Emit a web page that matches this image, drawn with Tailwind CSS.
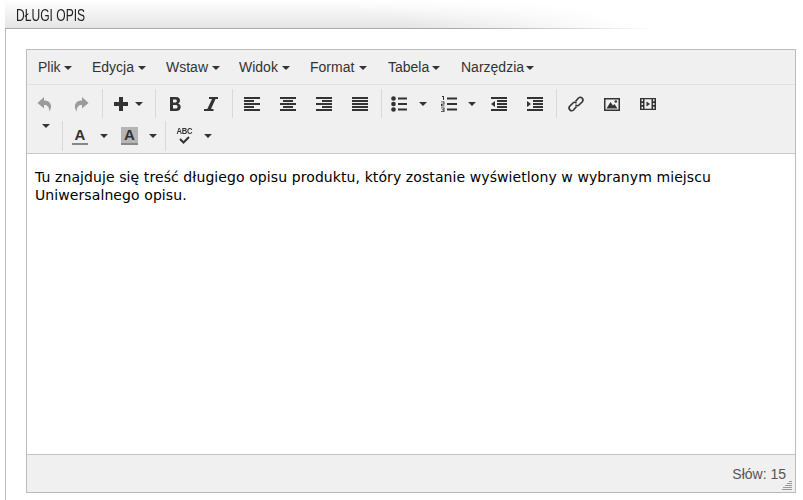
<!DOCTYPE html>
<html lang="pl">
<head>
<meta charset="UTF-8">
<title>Długi opis</title>
<script src="https://cdn.jsdelivr.net/npm/@tailwindcss/browser@4"></script>
</head>
<body class="bg-white font-['Liberation_Sans',Arial,sans-serif] text-[14px] text-[#333]">
<div class="w-[803px] h-[500px] overflow-hidden flex flex-col">
  <!-- section title -->
  <div class="relative ml-[5px] h-[29px] flex items-end">
    <div class="absolute inset-0 w-[615px] bg-gradient-to-b from-white to-[#e4e4e4] [mask-image:radial-gradient(ellipse_620px_60px_at_0%_100%,black_65%,transparent_100%)]"></div>
    <div class="absolute left-0 bottom-0 w-[650px] h-[1px] bg-gradient-to-r from-[#aaa] from-70% to-transparent"></div>
    <span class="relative ml-[11px] pb-[3px] text-[17px] leading-[20px] text-[#222] origin-left scale-x-[0.71]">DŁUGI OPIS</span>
  </div>
  <div class="ml-[5px] flex-1 border-l border-[#bbb] pt-[20px] pl-[20px]">
    <!-- editor -->
    <div class="w-[770px] h-[444px] border border-[#bbb] flex flex-col bg-[#f0f0f0]">
      <div class="h-[35px] flex items-center pl-[11px] border-b border-[#e2e2e2] shrink-0 pt-[1px]">
        <div class="flex items-center w-[54px]">Plik<i class="ml-[3px] border-x-4 border-t-4 border-x-transparent border-t-[#333]"></i></div>
        <div class="flex items-center w-[74px]">Edycja<i class="ml-[4px] border-x-4 border-t-4 border-x-transparent border-t-[#333]"></i></div>
        <div class="flex items-center w-[73px]">Wstaw<i class="ml-[4px] border-x-4 border-t-4 border-x-transparent border-t-[#333]"></i></div>
        <div class="flex items-center w-[71px]">Widok<i class="ml-[4px] border-x-4 border-t-4 border-x-transparent border-t-[#333]"></i></div>
        <div class="flex items-center w-[78px]">Format<i class="ml-[5px] border-x-4 border-t-4 border-x-transparent border-t-[#333]"></i></div>
        <div class="flex items-center w-[73px]">Tabela<i class="ml-[3px] border-x-4 border-t-4 border-x-transparent border-t-[#333]"></i></div>
        <div class="flex items-center">Narzędzia<i class="ml-[2px] border-x-4 border-t-4 border-x-transparent border-t-[#333]"></i></div>
      </div>
      <!-- toolbar row 1 -->
      <div class="h-[34px] flex items-start pt-[4px] shrink-0">
        <div class="flex h-[29px] items-center">
          <div class="w-[36px] flex justify-center"><svg width="16" height="16" viewBox="0 0 16 16" fill="#9b9b9b"><path d="M7 1 L0.5 7 L7 12.5 V9 C10 8.8 12 10.5 12.5 15.5 C15.5 10.5 14.5 4.8 7 4.6 Z"/></svg></div>
          <div class="w-[36px] flex justify-center"><svg width="16" height="16" viewBox="0 0 16 16" fill="#9b9b9b"><path d="M9 1 L15.5 7 L9 12.5 V9 C6 8.8 4 10.5 3.5 15.5 C0.5 10.5 1.5 4.8 9 4.6 Z"/></svg></div>
        </div>
        <div class="ml-[3px] border-l border-[#d9d9d9] flex h-[29px] items-center w-[53px] pl-[10px]">
          <svg width="16" height="16" viewBox="0 0 16 16" fill="#333"><path d="M6 1h4v5h5v4h-5v5H6v-5H1V6h5z"/></svg>
          <i class="ml-[6px] border-x-4 border-t-4 border-x-transparent border-t-[#333]"></i>
        </div>
        <div class="border-l border-[#d9d9d9] flex h-[29px] items-center pl-[1px]">
          <div class="w-[36px] flex justify-center"><svg width="16" height="16" viewBox="0 0 16 16" fill="#333"><path fill-rule="evenodd" d="M3 1h6c2.800 0 4 1.500 4 3.400 0 1.500-.8 2.600-2 3.100 1.600.4 2.700 1.700 2.700 3.600 0 2.500-1.800 3.900-4.500 3.900H3zM6 3.500v3h2.300c1 0 1.600-.6 1.600-1.500s-.6-1.500-1.600-1.500zM6 9v3.500h2.700c1.100 0 1.900-.6 1.900-1.750S9.800 9 8.700 9z"/></svg></div>
          <div class="w-[36px] flex justify-center"><svg width="16" height="16" viewBox="0 0 16 16" fill="#333"><path d="M6 1h9v2h-2.500L8 13h2.500v2H1v-2h3.300L9 3H6z"/></svg></div>
        </div>
        <div class="ml-[3px] border-l border-[#d9d9d9] flex h-[29px] items-center pl-[1px]">
          <div class="w-[36px] flex justify-center"><svg width="16" height="16" viewBox="0 0 16 16" fill="#333"><path d="M0 1h16v2H0zM0 4h10v2H0zM0 7h16v2H0zM0 10h10v2H0zM0 13h16v2H0z"/></svg></div>
          <div class="w-[36px] flex justify-center"><svg width="16" height="16" viewBox="0 0 16 16" fill="#333"><path d="M0 1h16v2H0zM3 4h10v2H3zM0 7h16v2H0zM3 10h10v2H3zM0 13h16v2H0z"/></svg></div>
          <div class="w-[36px] flex justify-center"><svg width="16" height="16" viewBox="0 0 16 16" fill="#333"><path d="M0 1h16v2H0zM6 4h10v2H6zM0 7h16v2H0zM6 10h10v2H6zM0 13h16v2H0z"/></svg></div>
          <div class="w-[36px] flex justify-center"><svg width="16" height="16" viewBox="0 0 16 16" fill="#333"><path d="M0 1h16v2H0zM0 4h16v2H0zM0 7h16v2H0zM0 10h16v2H0zM0 13h16v2H0z"/></svg></div>
        </div>
        <div class="ml-[3px] border-l border-[#d9d9d9] flex h-[29px] items-center pl-[9px]">
          <svg width="16" height="16" viewBox="0 0 16 16" fill="#333"><circle cx="2.500" cy="2.500" r="2.300"/><circle cx="2.500" cy="8" r="2.300"/><circle cx="2.500" cy="13.500" r="2.300"/><path d="M7 1.500h9v2H7zM7 7h9v2H7zM7 12.500h9v2H7z"/></svg>
          <i class="ml-[12px] border-x-4 border-t-4 border-x-transparent border-t-[#333]"></i>
          <svg class="ml-[14px]" width="16" height="16" viewBox="0 0 16 16" fill="#333"><path d="M1 0h2v4H2V1H1zM0 5.500h3.500v3H1.200v1h2.300v.8H0V7.700h2.500v-1.400H0zM0 11.500h3.500v4.500H0v-.8h2.500v-1H.8v-.8h1.700v-1.100H0z"/><path d="M6 1.500h10v2H6zM6 7h10v2H6zM6 12.500h10v2H6z"/></svg>
          <i class="ml-[11px] border-x-4 border-t-4 border-x-transparent border-t-[#333]"></i>
          <div class="ml-[5px] w-[36px] flex justify-center"><svg width="16" height="16" viewBox="0 0 16 16" fill="#333"><path d="M0 1h16v2H0zM6 4h10v2H6zM6 7h10v2H6zM6 10h10v2H6zM0 13h16v2H0zM4 5v6L0 8z"/></svg></div>
          <div class="w-[36px] flex justify-center"><svg width="16" height="16" viewBox="0 0 16 16" fill="#333"><path d="M0 1h16v2H0zM6 4h10v2H6zM6 7h10v2H6zM6 10h10v2H6zM0 13h16v2H0zM0 5v6l4-3z"/></svg></div>
        </div>
        <div class="ml-[3px] border-l border-[#d9d9d9] flex h-[29px] items-center pl-[1px]">
          <div class="w-[36px] flex justify-center"><svg width="18" height="18" viewBox="0 0 18 18" fill="none" stroke="#333" stroke-width="1.600"><path d="M8.500 6.500 L11.500 3 a2.700 2.700 0 0 1 3.800 3.800 L12.300 9.800 a2.700 2.700 0 0 1-3.800 0"/><path d="M9.500 11.500 L6.500 15 a2.700 2.700 0 0 1-3.800-3.800 L5.700 8.200 a2.700 2.700 0 0 1 3.800 0"/></svg></div>
          <div class="w-[36px] flex justify-center"><svg width="16" height="16" viewBox="0 0 16 16" fill="#333"><path fill-rule="evenodd" d="M0 2h16v13H0zM1.500 3.500v10h13v-10z"/><path d="M2.500 12.500 L6.500 6 L9 9.500 L10.500 8 L13.500 12.500z"/><circle cx="11.800" cy="5.500" r="1.300"/></svg></div>
          <div class="w-[36px] flex justify-center"><svg width="16" height="16" viewBox="0 0 16 16" fill="#333"><path fill-rule="evenodd" d="M0 2h16v12H0zM1.500 3.300v2h1.500v-2zM1.500 7v2h1.500V7zM1.500 10.700v2h1.500v-2zM13 3.300v2h1.500v-2zM13 7v2h1.500V7zM13 10.700v2h1.500v-2zM4.500 3.300v9.400h7V3.300z"/><path d="M6.500 5.500v5L10 8z"/></svg></div>
        </div>
      </div>
      <!-- toolbar row 2 -->
      <div class="h-[35px] flex items-start pt-[2px] shrink-0 border-b border-[#c9c9c9]">
        <div class="w-[35px] h-[29px] flex justify-center pt-[3px] pl-[2px]"><i class="border-x-4 border-t-4 border-x-transparent border-t-[#333]"></i></div>
        <div class="border-l border-[#d9d9d9] flex h-[30px] items-center pl-[9px]">
          <div class="w-[16px] h-[18px] flex flex-col items-center justify-end font-bold text-[15px] leading-[13px] text-[#333]">A<span class="w-[16px] h-[2px] mt-[2px] bg-[#888]"></span></div>
          <i class="ml-[12px] border-x-4 border-t-4 border-x-transparent border-t-[#333]"></i>
          <div class="ml-[13px] w-[17px] h-[18px] flex flex-col items-center justify-end font-bold text-[15px] leading-[13px] text-[#333] bg-[#b5b5b5]">A<span class="w-[17px] h-[2px] mt-[2px] bg-[#888]"></span></div>
          <i class="ml-[11px] border-x-4 border-t-4 border-x-transparent border-t-[#333]"></i>
        </div>
        <div class="ml-[8px] border-l border-[#d9d9d9] flex h-[30px] items-center pl-[10px]">
          <div class="w-[16px] h-[18px] flex flex-col items-center"><span class="text-[9px] leading-[8px] font-bold tracking-[-0.3px] scale-x-[0.85]">ABC</span><svg class="mt-[1px]" width="11" height="8" viewBox="0 0 11 8" fill="none" stroke="#333" stroke-width="2"><path d="M1 3l3.500 3.500L10 1"/></svg></div>
          <i class="ml-[12px] border-x-4 border-t-4 border-x-transparent border-t-[#333]"></i>
        </div>
      </div>
      <!-- content -->
      <div class="h-[300px] shrink-0 bg-white px-[8px] pt-[14px] font-['DejaVu_Sans',Verdana,sans-serif] text-[14px] leading-[18px] tracking-[0.09px] text-black">Tu znajduje się treść długiego opisu produktu, który zostanie wyświetlony w wybranym miejscu<br>Uniwersalnego opisu.</div>
      <!-- status bar -->
      <div class="relative flex-1 border-t border-[#c4c4c4] flex justify-end items-center pr-[9px] pt-[2px] text-[#555]">
        Słów: 15
        <svg class="absolute right-[3px] bottom-[2px]" width="10" height="9" viewBox="0 0 10 9" stroke="#999" stroke-width="1"><path d="M7 .5h3M5 2.500h5M3 4.500h7M1 6.500h9M0 8.500h10"/></svg>
      </div>
    </div>
  </div>
</div>
</body>
</html>
